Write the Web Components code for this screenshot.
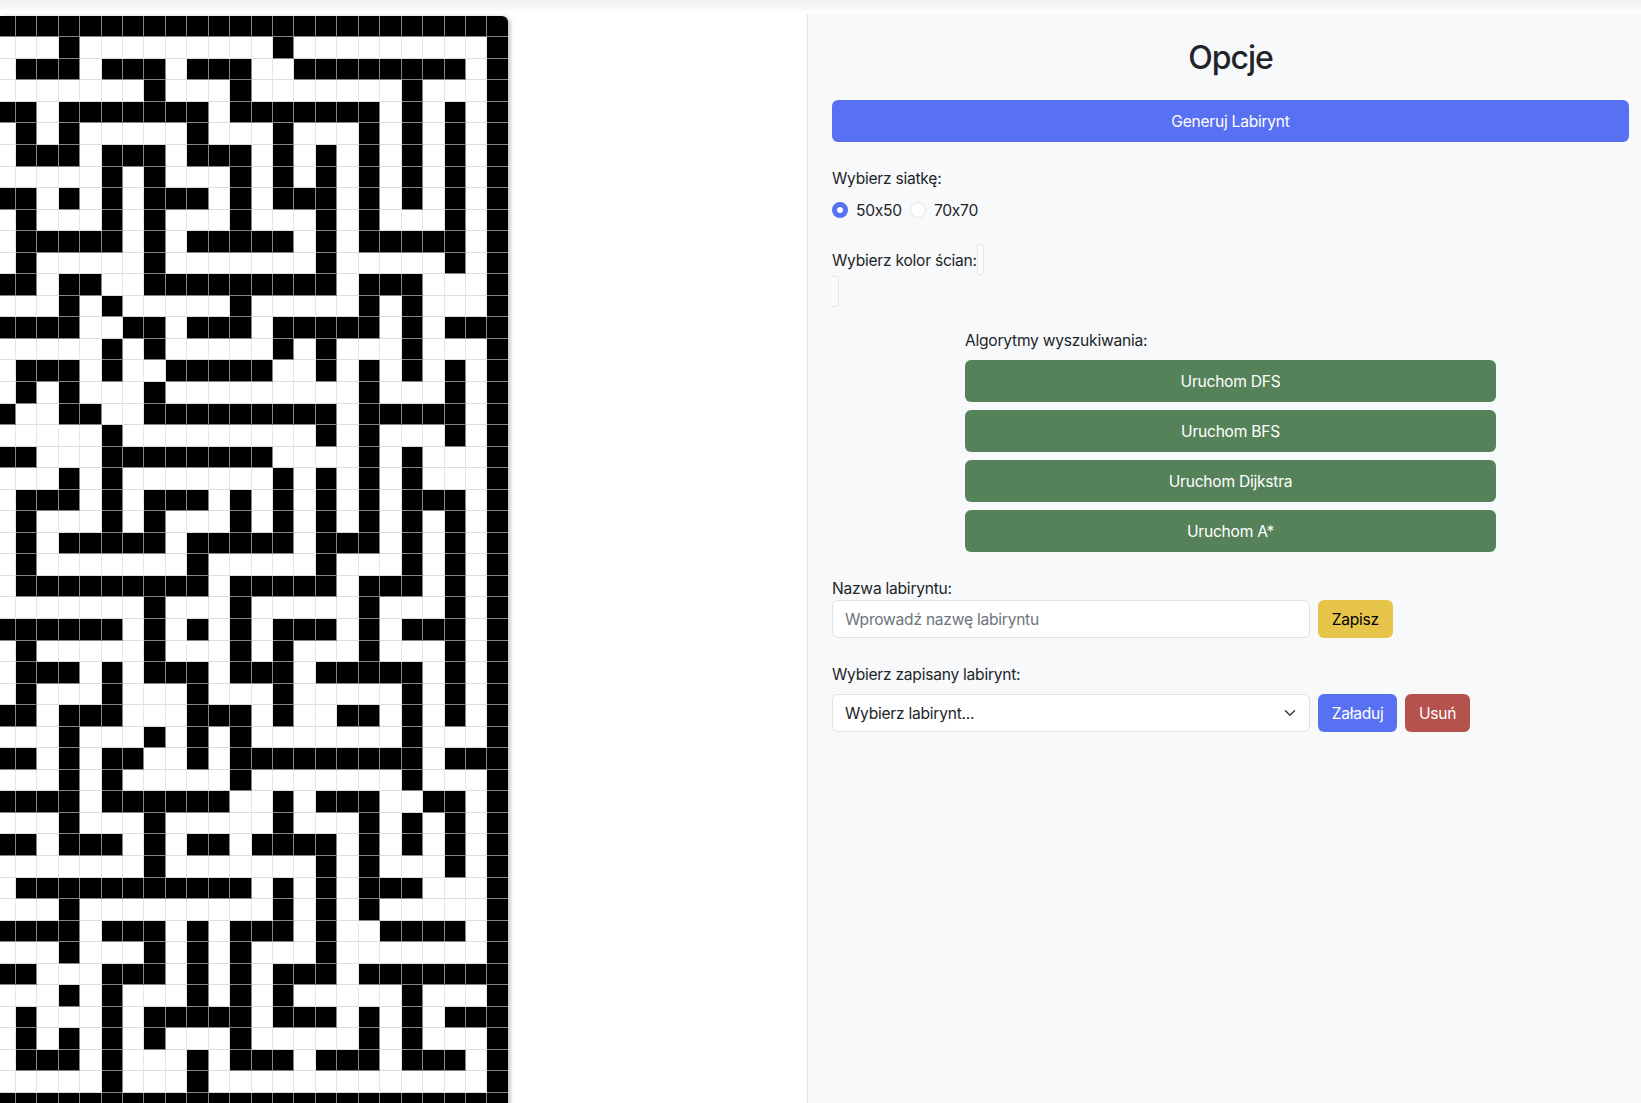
<!DOCTYPE html>
<html lang="pl">
<head>
<meta charset="utf-8">
<title>Labirynt</title>
<style>
    html,body{margin:0;height:100%;background:#fff}
    body{
        font-family:Inter,"Liberation Sans",sans-serif;
        font-size:15.6px;
        letter-spacing:-.25px;
        font-feature-settings:"calt" 0;
        color:#212529;
        overflow:hidden;
    }
</style>
</head>
<body>
<app-shell>
    <maze-board slot="board"></maze-board>
    <options-panel slot="panel"></options-panel>
</app-shell>

<script>
// kazdy wiersz: kolumny ze scianami, kolumna 23 (prawa krawedz) jest zawsze czarna
const MAZE_ROWS = [
    "0-22","3 13","1-3 5-7 9-11 14-21","7 11 19","0-1 3-9 11-17 19 21","1 3 9 13 17 19 21",
    "1-3 5-7 9-11 13 15 17 19 21","5 7 11 13 15 17 19 21","0-1 3 5 7-9 11 13-15 17 19 21",
    "1 5 7 11 15 17 21","1-5 7 9-13 15 17-21","1 7 15 21","0-1 3-4 7-15 17-19","3 5 11 17 19",
    "0-3 6-7 9-11 13-17 19 21-22","5 7 13 15 19","1-3 5 8-12 15 17 19 21","1 3 7 17 21",
    "0 3-4 7-15 17-21","5 15 17 21","0-1 5-12 17 19","3 5 13 15 17 19",
    "1-3 5 7-9 11 13 15 17 19-21","1 5 7 11 13 15 17 19 21","1 3-7 9-13 15-17 19 21","1 9 15 19 21",
    "1-9 11-15 17-19 21","7 11 17 21","0-5 7 9 11 13-15 17 19-21","1 7 11 13 17 21",
    "1-3 5 7-9 11-13 15-19 21","1 5 9 13 19 21","0-1 3-5 9-11 13 16-17 19 21","3 7 9 11 19",
    "0-1 3 5-6 9 11-19 21-22","3 5 11 19","0-3 5-10 13 15-17 20-21","3 7 13 17 19 21",
    "0-1 3-5 7 9-10 12-15 17 19 21","7 15 17 21","1-11 13 15 17-19","3 13 15 17",
    "0-3 5-7 9 11-13 15 18-21","3 7 9 11 15","0-1 5-7 9 11 13-15 17-22","3 5 9 11 13 19",
    "1 5 7-11 13-15 17 19 21-22","1 3 5 7 11 17 19","1-3 5 9 11-13 15-17 19-21","5 9","0-22"
]

class MazeBoard extends HTMLElement{
    constructor(){
        super()
        this.attachShadow({mode:"open"})
    }
    komorki(){
        let html = ""
        MAZE_ROWS.forEach(row => {
            const walls = new Set([23])
            row.split(" ").forEach(part => {
                const [a,b] = part.split("-").map(Number)
                for(let i = a; i <= (b === undefined ? a : b); i++) walls.add(i)
            })
            for(let c = 0; c < 24; c++){
                html += walls.has(c) ? '<div class="w"></div>' : '<div></div>'
            }
        })
        return html
    }
    connectedCallback(){
        this.shadowRoot.innerHTML = `
        <style>
            :host{
                display:block;
                width:508.4px;
                height:1089px;
                overflow:hidden;
                border-top-right-radius:6px;
                box-shadow:2px 1px 4px rgba(0,0,0,.28);
                background:#fff;
            }
            .grid{
                display:grid;
                grid-template-columns:repeat(24,21.45px);
                grid-auto-rows:21.55px;
                margin-left:-5.68px;
            }
            .grid div{
                box-sizing:border-box;
                border-right:1px solid #e6e6e6;
                border-bottom:1px solid #dcdcdc;
            }
            .grid .w{
                background:#000;
                border-right-color:#858585;
                border-bottom-color:#858585;
            }
        </style>
        <div class="grid">${this.komorki()}</div>
        `
    }
}

class UiButton extends HTMLElement{
    constructor(){
        super()
        this.attachShadow({mode:"open"})
        this.shadowRoot.innerHTML = `
        <style>
            :host{display:block;--bg:#5870f2;--fg:#fff}
            button{
                display:block;
                box-sizing:border-box;
                width:100%;
                height:var(--h,42px);
                padding:1px 13.7px 0;
                border:0;
                border-radius:6px;
                background:var(--bg);
                color:var(--fg);
                font:inherit;
                letter-spacing:inherit;
                text-align:center;
            }
        </style>
        <button type="button"><slot></slot></button>
        `
    }
}

class OptionsPanel extends HTMLElement{
    constructor(){
        super()
        this.attachShadow({mode:"open"})
    }
    connectedCallback(){
        this.shadowRoot.innerHTML = `
        <style>
            :host{
                display:block;
                box-sizing:border-box;
                height:100%;
                padding:25px 12px 0 24px;
                background:#f8f9fb;
                border-left:1px solid #dee2e6;
                line-height:24px;
            }
            h2{
                margin:0 0 23px;
                font-size:32px;
                line-height:38px;
                font-weight:500;
                letter-spacing:-1px;
                text-align:center;
                color:#212529;
            }
            .lbl{height:24px;line-height:26px}
            .grid-label{margin-top:24px}
            .radios{display:flex;margin-top:8px}
            .radios label{display:flex;align-items:flex-start;height:24px;line-height:26px;margin-right:8px}
            .radios input{
                appearance:none;
                box-sizing:border-box;
                width:16px;
                height:16px;
                margin:4px 8px 0 0;
                border:1px solid #e3e5e9;
                border-radius:50%;
                background:#fff;
            }
            .radios input:checked{border:5px solid #5870f2}
            .color-row{display:flex;align-items:flex-start;margin-top:22px;height:31px;line-height:33px}
            .color-row + .color-row{margin-top:1px}
            .color-row input{
                appearance:none;
                box-sizing:border-box;
                flex:none;
                width:7px;
                height:31px;
                margin:0 0 0 .6px;
                padding:0;
                border:1px solid #e6e8ec;
                border-radius:3px;
                background:#fdfdfe;
            }
            .color-row input::-webkit-color-swatch-wrapper{display:none}
            .color-row + .color-row input{margin:0;border-left:0;border-radius:0 3px 3px 0}
            .algos{width:531px;margin:21px auto 0}
            .algos .lbl{margin-bottom:8px}
            .algos ui-button{margin-top:8px;--bg:#558259}
            .name-label{margin-top:25px;line-height:23px}
            .row{display:flex;gap:8px;height:38px}
            .control{
                position:relative;
                flex:none;
                width:478px;
            }
            .control input,.control select{
                appearance:none;
                display:block;
                box-sizing:border-box;
                width:100%;
                height:38px;
                margin:0;
                padding:0 12px;
                border:1px solid #dee2e6;
                border-radius:6px;
                background:#fff;
                color:#212529;
                font:inherit;
                letter-spacing:inherit;
                outline:none;
            }
            .control select{padding-top:1px}
            .control input::placeholder{color:#6c757d;opacity:1}
            .control svg{position:absolute;right:14px;top:13px;pointer-events:none}
            .row ui-button{--h:38px;flex:none}
            .save{--bg:#e6c54a;--fg:#000}
            .pick-label{margin:25px 0 7px}
            .del{--bg:#b5524e}
        </style>
        <h2>Opcje</h2>
        <ui-button>Generuj Labirynt</ui-button>

        <div class="lbl grid-label">Wybierz siatkę:</div>
        <div class="radios">
            <label><input type="radio" name="siatka" checked>50x50</label>
            <label><input type="radio" name="siatka">70x70</label>
        </div>

        <div class="color-row"><span>Wybierz kolor ścian:</span><input type="color" value="#000000" aria-label="Kolor ścian"></div>
        <div class="color-row"><input type="color" value="#ffffff" aria-label="Kolor tła"></div>

        <div class="algos">
            <div class="lbl">Algorytmy wyszukiwania:</div>
            <ui-button>Uruchom DFS</ui-button>
            <ui-button>Uruchom BFS</ui-button>
            <ui-button>Uruchom Dijkstra</ui-button>
            <ui-button>Uruchom A*</ui-button>
        </div>

        <div class="name-label">Nazwa labiryntu:</div>
        <div class="row">
            <div class="control"><input type="text" placeholder="Wprowadź nazwę labiryntu"></div>
            <ui-button class="save">Zapisz</ui-button>
        </div>

        <div class="pick-label">Wybierz zapisany labirynt:</div>
        <div class="row">
            <div class="control">
                <select><option>Wybierz labirynt...</option></select>
                <svg width="12" height="12" viewBox="0 0 16 16" fill="none" stroke="#343a40" stroke-width="2" stroke-linecap="round" stroke-linejoin="round"><path d="m2 5 6 6 6-6"/></svg>
            </div>
            <ui-button>Załaduj</ui-button>
            <ui-button class="del">Usuń</ui-button>
        </div>
        `
    }
}

class AppShell extends HTMLElement{
    constructor(){
        super()
        this.attachShadow({mode:"open"})
        this.shadowRoot.innerHTML = `
        <style>
            :host{display:block;height:100vh;overflow:hidden}
            .strip{height:14px;background:linear-gradient(#f2f2f2,#f7f7f7 55%,#fff 85%)}
            main{display:flex;height:calc(100vh - 14px)}
            .left{flex:none;width:807px;padding-top:1.7px;box-sizing:border-box}
            .right{flex:1;min-width:0}
        </style>
        <div class="strip"></div>
        <main>
            <div class="left"><slot name="board"></slot></div>
            <div class="right"><slot name="panel"></slot></div>
        </main>
        `
    }
}

customElements.define("maze-board", MazeBoard)
customElements.define("ui-button", UiButton)
customElements.define("options-panel", OptionsPanel)
customElements.define("app-shell", AppShell)
</script>
</body>
</html>
